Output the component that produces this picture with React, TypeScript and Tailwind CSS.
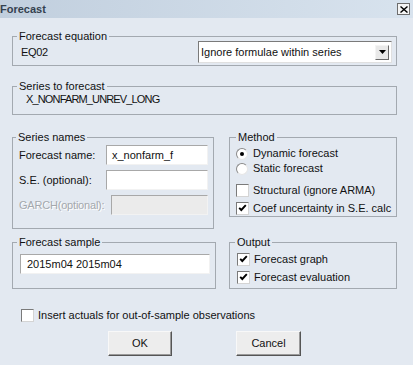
import React from "react";

const BG = "bg-[#e3e9f1]";

function Group({
  title,
  className,
  legendClass,
  children,
}: {
  title: string;
  className: string;
  legendClass: string;
  children: React.ReactNode;
}) {
  return (
    <div className={`border border-[#a3a9b0] ${className}`}>
      <div className={`-mt-[7px] w-fit ${BG} px-[2px] leading-[13px] ${legendClass}`}>{title}</div>
      {children}
    </div>
  );
}

function Check({ checked }: { checked?: boolean }) {
  return (
    <span className="flex h-[13px] w-[13px] shrink-0 items-center justify-center border border-t-[#7a7a7a] border-l-[#7a7a7a] border-r-[#d4d4d4] border-b-[#d4d4d4] bg-white">
      {checked && (
        <svg width="9" height="9" viewBox="0 0 9 9">
          <path d="M1.2 3.8 L3.3 6 L7.8 1.2" stroke="#000" strokeWidth="1.9" fill="none" />
        </svg>
      )}
    </span>
  );
}

function Radio({ checked }: { checked?: boolean }) {
  return (
    <span className="flex h-[12px] w-[12px] shrink-0 items-center justify-center rounded-full border border-t-[#8a8a8a] border-l-[#8a8a8a] border-r-[#e6e6e6] border-b-[#e6e6e6] bg-white">
      {checked && <span className="h-[4px] w-[4px] rounded-full bg-black" />}
    </span>
  );
}

function Input({ value, className, disabled }: { value?: string; className: string; disabled?: boolean }) {
  return (
    <div
      className={`flex h-[20px] items-center border border-t-[#a8a8a8] border-l-[#a8a8a8] border-r-[#f2f2f2] border-b-[#f2f2f2] pl-[5px] ${
        disabled ? "bg-[#ebebeb]" : "bg-white"
      } ${className}`}
    >
      {value}
    </div>
  );
}

function Button({ label, className }: { label: string; className: string }) {
  return (
    <div
      className={`flex h-[25px] items-center justify-center border border-t-[#f8f8f8] border-l-[#f8f8f8] border-r-[#555] border-b-[#555] bg-[#ededed] shadow-[inset_-1px_-1px_0_#9a9a9a] ${className}`}
    >
      {label}
    </div>
  );
}

export default function App() {
  return (
    <div
      className={`h-[365px] w-[413px] overflow-hidden ${BG} font-['Liberation_Sans',Arial,sans-serif] text-[11px] leading-[13px] text-[#111]`}
    >
      <div className="flex h-[18px] items-center justify-between bg-gradient-to-r from-[#c1cfde] to-[#d8e3ee] pr-[3px]">
        <span className="text-[11px] font-bold text-[#34414f]">Forecast</span>
        <span className="flex h-[12px] w-[13px] items-center justify-center border border-[#6d6d6d] bg-[#f4f4f4]">
          <svg width="8" height="7" viewBox="0 0 8 7">
            <path d="M0.5 0.5 L7.5 6.5 M7.5 0.5 L0.5 6.5" stroke="#000" strokeWidth="1.4" />
          </svg>
        </span>
      </div>

      <div className="pl-[12px] pr-[16px]">
        <Group title="Forecast equation" className="mt-[18px]" legendClass="ml-[4px]">
          <div className="-mt-[2px] flex items-center justify-between pb-[2px] pl-[8px] pr-[4px]">
            <span className="tracking-[-0.3px]">EQ02</span>
            <div className="flex h-[22px] w-[194px] items-center justify-between border border-t-[#7a7a7a] border-l-[#7a7a7a] border-r-[#e0e0e0] border-b-[#e0e0e0] bg-white pl-[2px] pr-[2px]">
              <span>Ignore formulae within series</span>
              <span className="flex h-[15px] w-[14px] items-center justify-center border border-t-[#f4f4f4] border-l-[#f4f4f4] border-r-[#6a6a6a] border-b-[#6a6a6a] bg-[#e9e9e9]">
                <svg width="7" height="4" viewBox="0 0 7 4">
                  <path d="M0 0 H7 L3.5 4 Z" fill="#000" />
                </svg>
              </span>
            </div>
          </div>
        </Group>

        <Group title="Series to forecast" className="mt-[20px]" legendClass="ml-[4px]">
          <div className="pb-[8px] pl-[13px] tracking-[-0.85px]">X_NONFARM_UNREV_LONG</div>
        </Group>

        <div className="mt-[22px] flex items-start">
          <Group title="Series names" className="w-[202px]" legendClass="ml-[3px]">
            <div className="pb-[13px] pl-[6px] pr-[5px]">
              <div className="mt-[1px] flex items-center justify-between">
                <span>Forecast name:</span>
                <Input value="x_nonfarm_f" className="w-[102px]" />
              </div>
              <div className="mt-[5px] flex items-center justify-between">
                <span>S.E. (optional):</span>
                <Input className="w-[102px]" />
              </div>
              <div className="mt-[5px] flex items-center justify-between">
                <span className="whitespace-nowrap tracking-[-0.2px] text-[#a4a8ad] [text-shadow:1px_1px_0_#ffffff]">
                  GARCH(optional):
                </span>
                <Input className="w-[97px]" disabled />
              </div>
            </div>
          </Group>

          <Group title="Method" className="ml-[15px] w-[168px]" legendClass="ml-[6px]">
            <div className="pl-[6px]">
              <div className="mt-[2px] flex h-[15px] items-center gap-[5px]">
                <Radio checked />
                <span>Dynamic forecast</span>
              </div>
              <div className="flex h-[15px] items-center gap-[5px]">
                <Radio />
                <span>Static forecast</span>
              </div>
              <div className="mt-[7px] flex h-[15px] items-center gap-[4px]">
                <Check />
                <span>Structural (ignore ARMA)</span>
              </div>
              <div className="mt-[3px] flex h-[15px] items-center gap-[4px]">
                <Check checked />
                <span>Coef uncertainty in S.E. calc</span>
              </div>
            </div>
          </Group>
        </div>

        <div className="mt-[13px] flex items-start">
          <Group title="Forecast sample" className="w-[204px]" legendClass="ml-[4px]">
            <div className="pb-[14px] pl-[7px]">
              <Input value="2015m04 2015m04" className="mt-[5px] w-[190px] pl-[6px]" />
            </div>
          </Group>

          <Group title="Output" className="ml-[13px] w-[168px]" legendClass="ml-[5px]">
            <div className="pb-[3px] pl-[7px]">
              <div className="mt-[3px] flex h-[15px] items-center gap-[4px]">
                <Check checked />
                <span>Forecast graph</span>
              </div>
              <div className="mt-[3px] flex h-[15px] items-center gap-[4px]">
                <Check checked />
                <span>Forecast evaluation</span>
              </div>
            </div>
          </Group>
        </div>

        <div className="mt-[19px] flex h-[15px] items-center gap-[4px] pl-[9px]">
          <Check />
          <span>Insert actuals for out-of-sample observations</span>
        </div>

        <div className="mt-[8px] flex">
          <Button label="OK" className="ml-[96px] w-[64px]" />
          <Button label="Cancel" className="ml-[64px] w-[65px]" />
        </div>
      </div>
    </div>
  );
}
